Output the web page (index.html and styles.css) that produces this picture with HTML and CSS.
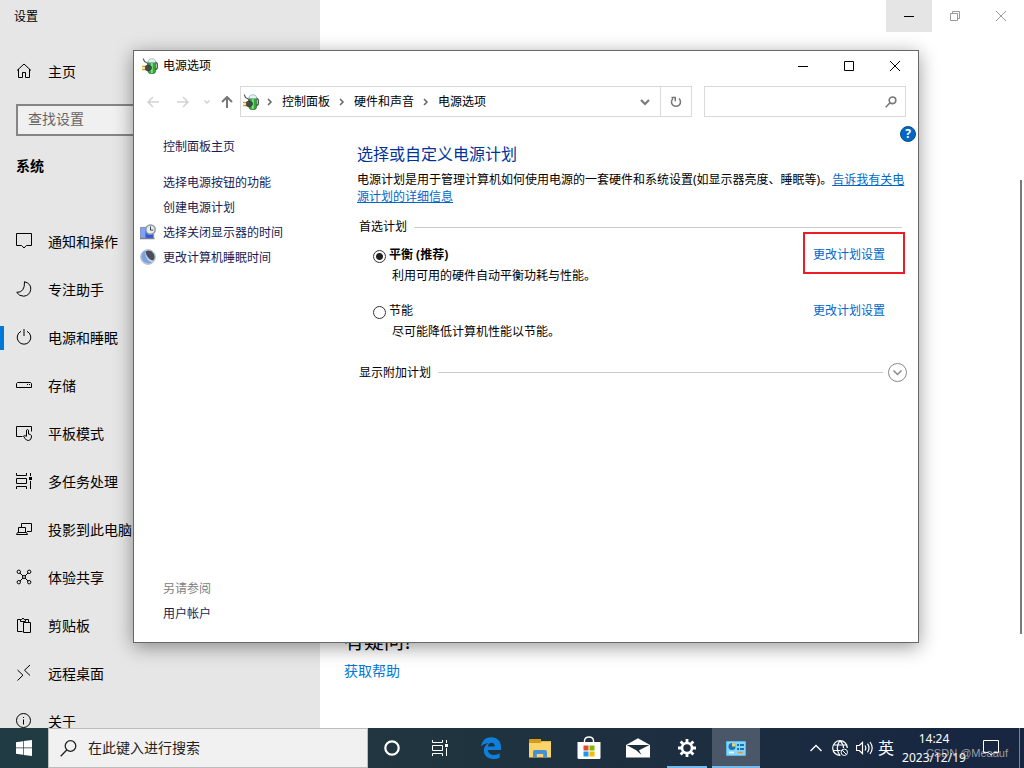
FILE: index.html
```html
<!DOCTYPE html>
<html lang="zh-CN">
<head>
<meta charset="utf-8">
<title>电源选项</title>
<link rel="stylesheet" href="styles.css">
</head>
<body>
<svg class="defs" aria-hidden="true">
  <symbol id="power-plug" viewBox="0 0 16 16">
    <path d="M12.500 4.500q2.800-.3 2.800 2.100v3q0 2-2.800 2" fill="none" stroke="#4b4f52" stroke-width="1.300"/>
    <path d="M6 3.500h7.600v9.700q0 2.500-3.800 2.500T6 13.200z" fill="#2fa83a" stroke="#24552f" stroke-width=".6"/>
    <path d="M6 4.500Q5.800.8 9.800.8t3.800 3.700z" fill="#e6f1f8" stroke="#8fa3ad" stroke-width=".7"/>
    <path d="M9.800 5v10" stroke="#7be56e" stroke-width="2"/>
    <path d="M1.200.5l1.300 3 2.500 1.300 1 2" fill="none" stroke="#55585c" stroke-width="1.100"/>
    <path d="M0 8.500h4M0 11.500h4" stroke="#d8a31c" stroke-width="1.400"/>
    <path d="M3.400 8.200q2-2 4-.9l2 1.200v2.600l-2 1.300q-2 1.200-4-.6z" fill="#45494d" stroke="#1f2225" stroke-width=".5"/>
  </symbol>
  <symbol id="task-view" viewBox="0 0 16 16">
    <path d="M.5 0v2.500h10V0M.5 16v-2.500h10V16M.5 5.500h10v5H.5zM14.500 0v3M14.500 8v8" fill="none" stroke="currentColor"/>
    <path d="M13 4h3v3h-3z" fill="currentColor" stroke="none"/>
  </symbol>
</svg>

<div class="desktop">
  <div class="settings">
    <aside class="sidebar">
      <div class="app-title">设置</div>
      <a class="nav-item" href="#home"><svg viewBox="0 0 16 16"><path d="M1 7.500L8 1l7 6.500M2.500 6v8.500h4v-5h3v5h4V6"/></svg>主页</a>
      <input class="settings-search" type="text" placeholder="查找设置" aria-label="查找设置">
      <h2 class="group-title">系统</h2>
      <nav class="nav-list">
        <a class="nav-item" href="#notify"><svg viewBox="0 0 16 16"><path d="M.5.5h15v12h-5L8 15l-2.500-2.500h-5z"/></svg>通知和操作</a>
        <a class="nav-item" href="#focus"><svg viewBox="0 0 16 16"><path d="M8.500.7q7 2 6.200 8-1 6-7 6.500-4.500 0-7-3.800Q9 11.500 8.500.7z"/></svg>专注助手</a>
        <a class="nav-item current" href="#power"><svg viewBox="0 0 16 16"><path d="M8 0v7M5 2.300a6.800 6.800 0 1 0 6 0"/></svg>电源和睡眠</a>
        <a class="nav-item" href="#storage"><svg viewBox="0 0 16 16"><path d="M1.500 5.500h13l1 1v4h-15v-4zM11 7.500h1M13 7.500h1"/></svg>存储</a>
        <a class="nav-item" href="#tablet"><svg viewBox="0 0 16 16"><path d="M6.500 11.500h-6v-10h15v5M10.500 11V5.200q1-1.300 2 0V9l2 .5q1.200.5 1 2.500-.3 3.500-3.200 3.500-2 0-3.300-2L7.500 11q.7-1.300 3 .5"/></svg>平板模式</a>
        <a class="nav-item" href="#multitask"><svg viewBox="0 0 16 16"><use href="#task-view"/></svg>多任务处理</a>
        <a class="nav-item" href="#project"><svg viewBox="0 0 16 16"><path d="M5.500 6V2.500h10v8H11M2.500 11.500v-5h7v5M.5 13.500h11l-1-2h-9z"/></svg>投影到此电脑</a>
        <a class="nav-item" href="#shared"><svg viewBox="0 0 16 16"><path d="M4 4l3 3M12 4L9 7M4 12l3-3M12 12L9 9"/><circle cx="2.800" cy="2.800" r="1.700"/><circle cx="13.200" cy="2.800" r="1.700"/><circle cx="2.800" cy="13.200" r="1.700"/><circle cx="13.200" cy="13.200" r="1.700"/><circle cx="8" cy="8" r="1.500"/></svg>体验共享</a>
        <a class="nav-item" href="#clipboard"><svg viewBox="0 0 16 16"><path d="M6.500 14.500h-5v-12h3M9.500 2.500h3V5M4.500 4.500v-2h1.300q1.200-3 2.400 0h1.300v2zM7.500 5.500h7v10h-7z"/></svg>剪贴板</a>
        <a class="nav-item" href="#remote"><svg viewBox="0 0 16 16"><path d="M1.500 5l5.500 5.200L1.500 15.500M14 0L8.500 5.200 14 10.500"/></svg>远程桌面</a>
        <a class="nav-item" href="#about"><svg viewBox="0 0 16 16"><circle cx="7.500" cy="7.500" r="7"/><path d="M7.500 6.500v5M7.500 4v1"/></svg>关于</a>
      </nav>
    </aside>
    <main class="settings-main">
      <div class="captions">
        <button class="caption pressed" aria-label="最小化"><svg viewBox="0 0 10 10"><path d="M0 5.500h10"/></svg></button>
        <button class="caption" aria-label="还原"><svg viewBox="0 0 10 10"><path d="M.5 2.500h7v7h-7zM2.500 2.500v-2h7v7h-2"/></svg></button>
        <button class="caption" aria-label="关闭"><svg viewBox="0 0 10 10"><path d="M0 0l10 10M10 0L0 10"/></svg></button>
      </div>
      <section class="questions">
        <h3>有疑问?</h3>
        <a href="#help">获取帮助</a>
      </section>
      <div class="scroll-thumb"></div>
    </main>
  </div>

  <section class="dialog" aria-label="电源选项">
    <header class="titlebar">
      <svg class="app-icon"><use href="#power-plug"/></svg>
      <span class="dialog-title">电源选项</span>
      <div class="captions">
        <button class="caption" aria-label="最小化"><svg viewBox="0 0 10 10"><path d="M0 5.500h10"/></svg></button>
        <button class="caption" aria-label="最大化"><svg viewBox="0 0 10 10"><path d="M.5.5h9v9h-9z"/></svg></button>
        <button class="caption" aria-label="关闭"><svg viewBox="0 0 10 10"><path d="M0 0l10 10M10 0L0 10"/></svg></button>
      </div>
    </header>
    <div class="toolbar">
      <div class="history">
        <button class="faded" aria-label="后退"><svg width="12" height="12" viewBox="0 0 12 12"><path d="M12 6H1M6 1L1 6l5 5"/></svg></button>
        <button class="faded" aria-label="前进"><svg width="12" height="12" viewBox="0 0 12 12"><path d="M0 6h11M6 1l5 5-5 5"/></svg></button>
        <button class="faded small" aria-label="最近位置"><svg width="6" height="6" viewBox="0 0 6 6"><path d="M.5 1.500L3 4l2.500-2.500"/></svg></button>
        <button aria-label="上移"><svg width="12" height="12" viewBox="0 0 12 12"><path d="M6 12V1M1 6l5-5 5 5"/></svg></button>
      </div>
      <div class="address">
        <svg class="app-icon"><use href="#power-plug"/></svg>
        <svg class="crumb-arrow" viewBox="0 0 6 8"><path d="M1 1l3 3-3 3"/></svg>
        <a href="#cp">控制面板</a>
        <svg class="crumb-arrow" viewBox="0 0 6 8"><path d="M1 1l3 3-3 3"/></svg>
        <a href="#hw">硬件和声音</a>
        <svg class="crumb-arrow" viewBox="0 0 6 8"><path d="M1 1l3 3-3 3"/></svg>
        <a href="#po">电源选项</a>
        <button class="drop" aria-label="以前的位置"><svg width="10" height="8" viewBox="0 0 10 8"><path d="M1 2l4 4 4-4"/></svg></button>
        <button class="refresh" aria-label="刷新"><svg width="12" height="12" viewBox="0 0 12 12"><path d="M3 2.500a4.500 4.500 0 1 0 6 0M1.500 1.500h3.800v3.800"/></svg></button>
      </div>
      <label class="find">
        <input type="text" aria-label="搜索控制面板">
        <svg viewBox="0 0 12 12"><circle cx="7.500" cy="4.300" r="3.300"/><path d="M5 6.800L.7 11.200"/></svg>
      </label>
    </div>
    <div class="dialog-body">
      <aside class="tasks">
        <a class="task task-home" href="#cphome">控制面板主页</a>
        <a class="task" href="#buttons">选择电源按钮的功能</a>
        <a class="task" href="#create">创建电源计划</a>
        <a class="task" href="#display"><svg viewBox="0 0 16 16"><path d="M.4 3.400h13.200v11.200H.4z" fill="#3158df" stroke="#8a93a8" stroke-width=".8"/><path d="M1 4h4.500v10H1z" fill="#7fa2f6"/><path d="M0 14.500h14.500" stroke="#7c828c" stroke-width="1.400"/><circle cx="10.500" cy="5.600" r="4.700" fill="#e6edef" stroke="#8c969d" stroke-width="1.500"/><path d="M10.500 2.500v3.600h2.700" fill="none" stroke="#344650"/></svg>选择关闭显示器的时间</a>
        <a class="task" href="#sleep"><svg viewBox="0 0 16 16"><circle cx="8" cy="8" r="7.400" fill="#c4d3ea" stroke="#b9bfc7"/><path d="M3 3a7 7 0 0 0 9 10.500Q5.500 11.500 5 2z" fill="#7ea3dc"/><path d="M5.500 2.200Q11 0 13.500 4.500T13 11.500Q6.500 10 5.500 2.200z" fill="#4b4e58"/></svg>更改计算机睡眠时间</a>
        <div class="see-also">
          <span class="task muted">另请参阅</span>
          <a class="task" href="#users">用户帐户</a>
        </div>
      </aside>
      <div class="plans">
        <button class="help" aria-label="帮助">?</button>
        <h1>选择或自定义电源计划</h1>
        <p class="intro">电源计划是用于管理计算机如何使用电源的一套硬件和系统设置(如显示器亮度、睡眠等)。<a href="#more">告诉我有关电源计划的详细信息</a></p>
        <div class="divider preferred"><span>首选计划</span></div>
        <div class="plan">
          <div class="plan-row">
            <input type="radio" name="plan" id="balanced" checked>
            <label for="balanced"><strong>平衡 (推荐)</strong></label>
            <a class="marked" href="#edit-balanced">更改计划设置</a>
          </div>
          <p>利用可用的硬件自动平衡功耗与性能。</p>
        </div>
        <div class="plan">
          <div class="plan-row">
            <input type="radio" name="plan" id="saver">
            <label for="saver">节能</label>
            <a href="#edit-saver">更改计划设置</a>
          </div>
          <p>尽可能降低计算机性能以节能。</p>
        </div>
        <div class="divider additional"><span>显示附加计划</span>
          <button class="expand" aria-label="展开"><svg viewBox="0 0 19 19"><circle cx="9.500" cy="9.500" r="9"/><path d="M5.500 7.500l4 4 4-4" stroke-width="1.500"/></svg></button>
        </div>
      </div>
    </div>
  </section>

  <footer class="taskbar">
    <button class="tile" aria-label="开始"><svg width="16" height="16" viewBox="0 0 16 16"><path fill="#fff" d="M0 2.200L7 1.200v6.400H0zM7.700 1.100L16 0v7.600H7.700zM0 8.300h7v6.500l-7-1zM7.700 8.300H16V16l-8.300-1.100z"/></svg></button>
    <label class="task-search">
      <svg viewBox="0 0 17 17"><circle cx="10.500" cy="6" r="5.300"/><path d="M6.700 10L.7 16.200"/></svg>
      <input type="text" placeholder="在此键入进行搜索" aria-label="在此键入进行搜索">
    </label>
    <button class="tile" aria-label="Cortana"><svg width="16" height="16" viewBox="0 0 16 16"><circle cx="8" cy="8" r="6.700" fill="none" stroke="#fff" stroke-width="2.200"/></svg></button>
    <button class="tile" aria-label="任务视图"><svg width="16" height="16"><use href="#task-view"/></svg></button>
    <div class="pinned">
      <button class="tile" aria-label="Edge"><svg width="20" height="22" viewBox="0 0 20 22"><path fill="#0f7fdc" d="M0 9.500C1 3.500 5 .3 10.200.3c6 0 9.800 4 9.800 9.600V13H6.800c.4 3.500 3.200 5 6.200 5 2.200 0 4-.6 5.700-1.700v4.200C17 21.500 14.800 22 12.300 22 6.500 22 2.800 18.400 2.800 13.600c0-3.400 1.800-6 4.500-7.400C4 6.300 1.500 7.600 0 9.500zM6.900 9.500h6.900c0-2.300-1.300-3.700-3.300-3.700S7.100 7.200 6.900 9.500z"/></svg></button>
      <button class="tile" aria-label="文件资源管理器"><svg width="22" height="19" viewBox="0 0 22 19"><path fill="#d99a15" d="M0 1q0-1 1-1h11v2h10v5H0z"/><path fill="#fbd46b" d="M0 4h11l2-1.500h9v16H0z"/><path fill="#4591d2" d="M4 18.500V13q0-2 2-2h10q2 0 2 2v5.500h-3.800V15H7.800v3.500z"/></svg></button>
      <button class="tile" aria-label="应用商店"><svg width="24" height="24" viewBox="0 0 24 24"><path d="M7.500 6V4.500Q8 1 12 1t4.500 3.500V6" fill="none" stroke="#fff" stroke-width="1.400"/><path d="M.5 6h23v15.500q0 1.500-1.500 1.500H2q-1.500 0-1.500-1.500z" fill="#fff"/><path d="M6.500 9.500h5v5h-5z" fill="#e34c26"/><path d="M12.500 9.500h5v5h-5z" fill="#7fba00"/><path d="M6.500 15.500h5v5h-5z" fill="#1a9be8"/><path d="M12.500 15.500h5v5h-5z" fill="#fbb900"/></svg></button>
      <button class="tile" aria-label="邮件"><svg width="24" height="20" viewBox="0 0 24 20"><path fill="#fff" d="M0 7L12 .3 24 7v12.500H0z"/><path fill="#1c303f" d="M.5 7h23L13 12.300l2.500 4.700-5.300-4.700z"/></svg></button>
      <button class="tile open" aria-label="设置"><svg width="18" height="18" viewBox="0 0 18 18"><circle cx="9" cy="9" r="5" fill="none" stroke="#fff" stroke-width="2.600"/><path d="M9 0v3.500M9 14.500V18M0 9h3.500M14.500 9H18M2.600 2.600l2.500 2.500M12.900 12.900l2.500 2.500M15.400 2.600l-2.500 2.500M5.100 12.900l-2.500 2.500" stroke="#fff" stroke-width="2.800"/></svg></button>
      <button class="tile open active" aria-label="控制面板"><svg width="20" height="15" viewBox="0 0 20 15"><rect width="20" height="15" rx="1" fill="#59b9ed"/><rect x="1" y="1" width="18" height="13" fill="#86d5fb"/><circle cx="6" cy="5.500" r="3.500" fill="#1376bd"/><path d="M6 5.500V2a3.500 3.500 0 0 1 3.500 3.500z" fill="#ffd15a"/><path d="M11 3h2v2h-2zM11 7h2v2h-2z" fill="#1376bd"/><path d="M14 3h4v2h-4zM14 7h4v2h-4z" fill="#1376bd"/><path d="M3 11.500h5" stroke="#fff" stroke-width="1.500"/><path d="M12 11.500h5" stroke="#e99b29" stroke-width="1.500"/></svg></button>
    </div>
    <div class="tray">
      <button aria-label="显示隐藏的图标"><svg width="12" height="8" viewBox="0 0 12 8"><path d="M.5 7L6 1.500 11.500 7" stroke-width="1.400"/></svg></button>
      <button aria-label="网络"><svg width="16" height="16" viewBox="0 0 16 16"><path stroke-width="1.200" d="M8.500 15.300A7.300 7.300 0 1 1 15.300 8M1 5h14M1 10.500h7.500M8 15.500Q2.500 8 8 .7M8 .7Q11.500 4 11.500 8"/><circle cx="12.300" cy="12.300" r="3.200"/><path d="M10.200 10.200l4.200 4.200"/></svg></button>
      <button aria-label="音量"><svg width="17" height="14" viewBox="0 0 17 14"><path stroke-width="1.200" d="M.5 4.500h2.800L6.500 1.500v11L3.300 9.500H.5zM9 4.500q1.600 2.500 0 5M11.500 2.700q3 4.300 0 8.600M14 1q4.400 6 0 12"/></svg></button>
      <button class="ime">英</button>
      <div class="clock"><span>14:24</span><span>2023/12/19</span></div>
      <button class="notice" aria-label="通知"><svg width="16" height="16" viewBox="0 0 16 16"><path d="M.5.500h15v12h-4.500L8 15l-2.500-2.500h-5z"/></svg></button>
      <button class="show-desktop" aria-label="显示桌面"></button>
    </div>
    <div class="watermark">CSDN @Meaauf</div>
  </footer>
</div>
</body>
</html>
```
FILE: styles.css
```css
* { box-sizing: border-box; }

body {
  margin: 0;
  font: 12px/16px "Noto Sans", "Noto Sans CJK SC", sans-serif;
  color: #000;
}

h1, h2, h3, p { margin: 0; font-weight: 400; }
a { color: #0066cc; text-decoration: none; }
svg { flex: none; fill: none; stroke: currentColor; }
.app-icon, .tile svg, .task svg { stroke: none; }

button, input {
  margin: 0;
  padding: 0;
  border: 0;
  background: none;
  font: inherit;
  color: inherit;
  outline: 0;
}

.defs { position: absolute; width: 0; height: 0; }

.desktop {
  position: relative;
  display: flex;
  flex-direction: column;
  height: 100vh;
  overflow: hidden;
}

/* Settings window */
.settings {
  display: flex;
  flex: 1;
  min-height: 0;
  overflow: hidden;
  background: #fff;
}

.sidebar {
  width: 320px;
  flex: none;
  background: #e6e6e6;
  font-size: 14px;
}

.app-title {
  height: 32px;
  margin-bottom: 16px;
  padding-left: 14px;
  font-size: 12px;
  line-height: 34px;
}

.nav-item {
  display: flex;
  align-items: center;
  gap: 16px;
  height: 48px;
  padding-left: 16px;
  color: #000;
}

.nav-item svg { width: 16px; height: 16px; margin-bottom: 2px; }
.nav-item.current { background: linear-gradient(#0078d7, #0078d7) left center / 4px 24px no-repeat; }

.settings-search {
  display: block;
  width: 288px;
  height: 32px;
  margin: 8px 16px 6px;
  padding: 0 10px 4px;
  border: 2px solid #858585;
  background: #f0f0f0;
}
.settings-search::placeholder { color: #666; opacity: 1; }

.group-title {
  margin-bottom: 28px;
  padding-left: 16px;
  font-size: 14px;
  font-weight: 700;
  line-height: 48px;
}

.settings-main {
  position: relative;
  display: flex;
  flex: 1;
  flex-direction: column;
  justify-content: space-between;
}

.captions { display: flex; margin-left: auto; }
.caption {
  display: flex;
  align-items: center;
  justify-content: center;
  width: 46px;
  height: 32px;
}
.caption svg { width: 10px; height: 10px; }
.settings .caption { color: #999; }
.settings .pressed { background: #e5e5e5; color: #000; }

.questions { padding: 0 24px 44px; font-size: 14px; line-height: 26px; }
.questions h3 { font-size: 20px; line-height: 32px; }
.questions a { color: #0078d7; }

.scroll-thumb {
  position: absolute;
  top: 180px;
  right: 2px;
  bottom: 94px;
  width: 2px;
  background: #7a7a7a;
}

/* Power options window */
.dialog {
  position: absolute;
  top: 50px;
  right: 105px;
  bottom: 125px;
  left: 133px;
  display: flex;
  flex-direction: column;
  border: 1px solid #686868;
  background: #fff;
  box-shadow: 0 4px 18px rgba(0, 0, 0, .4);
}

.app-icon { width: 16px; height: 16px; }

.titlebar { display: flex; align-items: center; gap: 5px; height: 29px; padding-left: 8px; }
.titlebar .caption { height: 29px; }

.toolbar { display: flex; height: 31px; margin: 6px 12px 0 0; }

.history {
  display: flex;
  align-items: center;
  width: 106px;
  padding-left: 4px;
  color: #777;
}
.history button { display: flex; justify-content: center; width: 30px; }
.history .small { width: 18px; }
.history button:last-child { width: 22px; }
.history .faded { color: #d2d2d2; }
.history svg { stroke-width: 2; }
.history .faded svg { stroke-width: 1.5; }

.address {
  display: flex;
  flex: 1;
  align-items: center;
  padding-left: 2px;
  border: 1px solid #d9d9d9;
}
.address a { color: #000; }
.address .app-icon { margin-right: -1px; }
.crumb-arrow { width: 6px; height: 8px; margin: 0 9px; color: #666; stroke-width: 1.5; }
.address button {
  display: flex;
  align-items: center;
  justify-content: center;
  height: 100%;
  width: 30px;
  color: #777;
}
.address button svg { stroke-width: 2; }
.address .refresh svg { stroke-width: 1.5; }
.address .drop { margin-left: auto; }
.address .refresh { width: 31px; border-left: 1px solid #d9d9d9; }

.find {
  display: flex;
  align-items: center;
  width: 202px;
  margin-left: 12px;
  padding-right: 8px;
  border: 1px solid #d9d9d9;
  color: #777;
}
.find input { flex: 1; min-width: 0; }
.find svg { width: 12px; height: 12px; stroke-width: 1.6; }

.dialog-body {
  display: grid;
  flex: 1;
  grid-template-columns: 223px 1fr;
  min-height: 0;
}

.tasks { display: flex; flex-direction: column; padding: 17px 0 16px 6px; }
.task {
  display: flex;
  align-items: center;
  gap: 7px;
  height: 25px;
  color: #151c55;
}
.task::before { content: ""; width: 16px; }
.task:has(svg)::before { display: none; }
.task svg { width: 16px; height: 16px; margin-bottom: 2px; }
.task-home { margin-bottom: 11px; }
.muted { color: #808080; }
.see-also { margin-top: auto; }

.plans { display: flex; flex-direction: column; padding: 9px 12px 0 0; }

.help {
  align-self: flex-end;
  width: 16px;
  height: 16px;
  margin-right: -10px;
  border: 1px solid #0b4f8a;
  border-radius: 50%;
  background: #0067c5;
  color: #fff;
  font-weight: 700;
  line-height: 14px;
}

h1 { color: #003399; font-size: 16px; line-height: 24px; }

.intro { margin-top: 5px; line-height: 17px; }
.intro a { text-decoration: underline; }

.divider { display: flex; align-items: center; gap: 7px; padding-left: 2px; }
.divider::after { content: ""; flex: 1; height: 1px; background: #ccc; }
.preferred { margin: 14px 4px 10px 0; }
.additional { margin: 6px -1px 0 0; }
.additional .expand { order: 2; margin-left: -2px; }
.expand { width: 19px; height: 19px; color: #888; }
.expand svg { display: block; width: 19px; height: 19px; }

.plan { margin-bottom: 14px; padding-left: 16px; }
.plan-row { display: flex; align-items: center; gap: 3px; height: 20px; }
.plan-row a { position: relative; margin: 0 21px 0 auto; }
.plan p { padding-left: 19px; line-height: 22px; }

.plan-row input {
  width: 13px;
  height: 13px;
  margin-top: 3px;
  border: 1px solid #333;
  border-radius: 50%;
  appearance: none;
}
.plan-row input:checked {
  background: radial-gradient(circle, #222 0 3px, transparent 4px);
}

/* Highlight frame drawn over the link */
.marked::after {
  content: "";
  position: absolute;
  inset: -15px -20px -11px -10px;
  border: 2px solid #ed1c24;
}

/* Taskbar */
.taskbar {
  position: relative;
  display: flex;
  height: 40px;
  background: linear-gradient(90deg, #203b43, #20353f 40%, #1c2d40 70%, #172541);
  color: #fff;
}

.tile {
  display: flex;
  align-items: center;
  justify-content: center;
  width: 48px;
  height: 40px;
}

.task-search {
  display: flex;
  align-items: center;
  gap: 11px;
  width: 320px;
  padding-left: 11px;
  border: 1px solid #bdbdbd;
  background: #f1f1f1;
  color: #222;
  font-size: 14px;
}
.task-search svg { width: 17px; height: 17px; stroke-width: 1.3; }
.task-search input { flex: 1; }
.task-search input::placeholder { color: #222; opacity: 1; }

.pinned { display: flex; gap: 1px; margin-left: 3px; }
.open { background: linear-gradient(#76b9ed, #76b9ed) center bottom / 40px 2px no-repeat; }
.active { background-color: #4a5769; background-size: 100% 2px; }

.tray { display: flex; align-items: center; margin-left: auto; }
.tray button { display: flex; align-items: center; justify-content: center; width: 24px; height: 40px; }
.tray .ime { width: 20px; font-size: 16px; }
.clock {
  display: flex;
  flex-direction: column;
  width: 76px;
  line-height: 19px;
  text-align: center;
}
.tray .notice { width: 38px; }
.tray .show-desktop { width: 5px; margin-left: 9px; border-left: 1px solid #7a8496; }

.watermark {
  position: absolute;
  right: 16px;
  bottom: 7px;
  font: 11px/16px "Liberation Sans", sans-serif;
  color: rgba(200, 200, 200, .75);
}
```
